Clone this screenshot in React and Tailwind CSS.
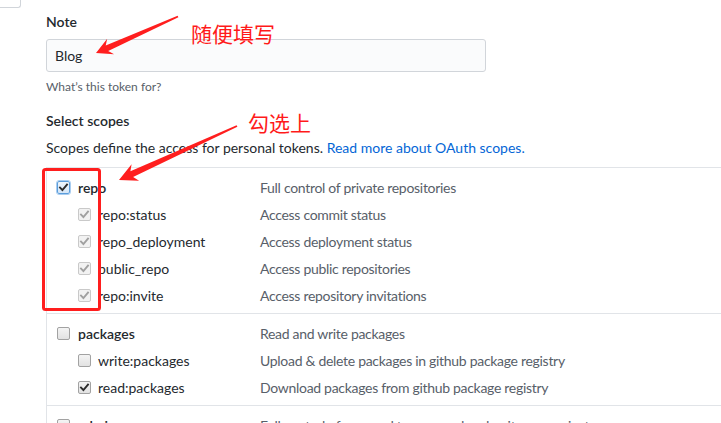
const FONT = "font-['Lato','Noto_Sans_CJK_SC',sans-serif]";

function arrow(tail, tip, L, W, neck, tw) {
  const dx = tip[0] - tail[0];
  const dy = tip[1] - tail[1];
  const len = Math.hypot(dx, dy);
  const u = [dx / len, dy / len];
  const n = [u[1], -u[0]];
  const p = (base, a, b) => [base[0] + a * u[0] + b * n[0], base[1] + a * u[1] + b * n[1]];
  const pts = [
    tip,
    p(tip, -L, W),
    p(tip, -L + 4, neck),
    p(tail, 0, tw),
    p(tail, 0, -tw),
    p(tip, -L + 4, -neck),
    p(tip, -L, -W),
  ];
  return pts.map((q) => q[0].toFixed(1) + ',' + q[1].toFixed(1)).join(' ');
}

function Box({ state }) {
  const base = 'relative w-[13px] h-[13px] rounded-[2px] border shrink-0 flex items-center justify-center';
  let cls = 'border-[#a2a2a2] bg-gradient-to-b from-[#f4f4f4] to-[#e2e2e2]';
  let stroke = '#2b2b2b';
  if (state === 'focus') cls = 'border-[#5b9ddb] bg-gradient-to-b from-[#eef5fc] to-[#d5e6f7] outline outline-1 outline-[#a9cdf0]';
  if (state === 'disabled') {
    cls = 'border-[#c9c9c9] bg-[#f2f2f2]';
    stroke = '#a0a0a0';
  }
  return (
    <span className={base + ' ' + cls}>
      {state !== 'off' && (
        <svg width="11" height="11" viewBox="0 0 11 11" className="block">
          <path d="M2 5.6 L4.4 8 L9 2.6" fill="none" stroke={stroke} strokeWidth="1.9" strokeLinecap="square" />
        </svg>
      )}
    </span>
  );
}

function Row({ sub, state, label, desc }) {
  return (
    <div className="h-[27px] flex items-center">
      <div className={'w-[213px] flex items-center ' + (sub ? 'pl-[31px]' : 'pl-[10px]')}>
        <Box state={state} />
        <span className={sub ? 'ml-[7px] text-[#24292e]' : 'ml-[8px] font-semibold text-[#24292e]'}>{label}</span>
      </div>
      <span className="text-[#586069] tracking-[-0.3px] whitespace-nowrap">{desc}</span>
    </div>
  );
}

function Group({ children }) {
  return <div className="border-t border-[#e1e4e8] pt-[6px] pb-[4px]">{children}</div>;
}

export default function App() {
  return (
    <div className={'relative w-[721px] h-[423px] overflow-hidden bg-white text-[14px] text-[#24292e] ' + FONT}>
      <div className="w-[21px] h-[8px] border-r border-b border-[#d1d5da] rounded-br-[3px]" />
      <div className="pl-[46px]">
        <div className="mt-[4px] leading-[20px] font-semibold">Note</div>
        <div className="mt-[7px] w-[440px] h-[33px] border border-[#d1d5da] rounded-[3px] bg-[#fafbfc] pl-[8px] flex items-center">
          Blog
        </div>
        <div className="mt-[6px] text-[12px] leading-[18px] text-[#586069]">What’s this token for?</div>
        <div className="mt-[15px] leading-[20px] font-semibold">Select scopes</div>
        <div className="mt-[7px] leading-[20px] whitespace-nowrap">
          Scopes define the access for personal tokens. <span className="text-[#0366d6]">Read more about OAuth scopes.</span>
        </div>
        <div className="mt-[9px] border-l border-[#e1e4e8]">
          <Group>
            <Row state="focus" label="repo" desc="Full control of private repositories" />
            <Row sub state="disabled" label="repo:status" desc="Access commit status" />
            <Row sub state="disabled" label="repo_deployment" desc="Access deployment status" />
            <Row sub state="disabled" label="public_repo" desc="Access public repositories" />
            <Row sub state="disabled" label="repo:invite" desc="Access repository invitations" />
          </Group>
          <Group>
            <Row state="off" label="packages" desc="Read and write packages" />
            <Row sub state="off" label="write:packages" desc="Upload & delete packages in github package registry" />
            <Row sub state="on" label="read:packages" desc="Download packages from github package registry" />
          </Group>
          <Group>
            <Row state="off" label="admin:org" desc="Full control of orgs and teams, read and write org projects" />
          </Group>
        </div>
      </div>

      <svg className="absolute left-0 top-0 pointer-events-none" width="721" height="423" viewBox="0 0 721 423">
        <polygon points={arrow([178, 16.5], [96, 53], 16, 8.5, 3, 0.9)} fill="#ff1e1e" />
        <polygon points={arrow([237, 126], [119, 180], 18, 9, 3.2, 0.9)} fill="#ff1e1e" />
        <rect x="43.5" y="169.5" width="56" height="140" rx="2" fill="none" stroke="#ff1e1e" strokeWidth="3" />
      </svg>
      <span className="absolute left-[191px] top-[23px] text-[21px] leading-[21px] text-[#ff1a1a] font-['Noto_Sans_CJK_SC',sans-serif]">
        随便填写
      </span>
      <span className="absolute left-[248px] top-[112px] text-[21px] leading-[21px] text-[#ff1a1a] font-['Noto_Sans_CJK_SC',sans-serif]">
        勾选上
      </span>
    </div>
  );
}
